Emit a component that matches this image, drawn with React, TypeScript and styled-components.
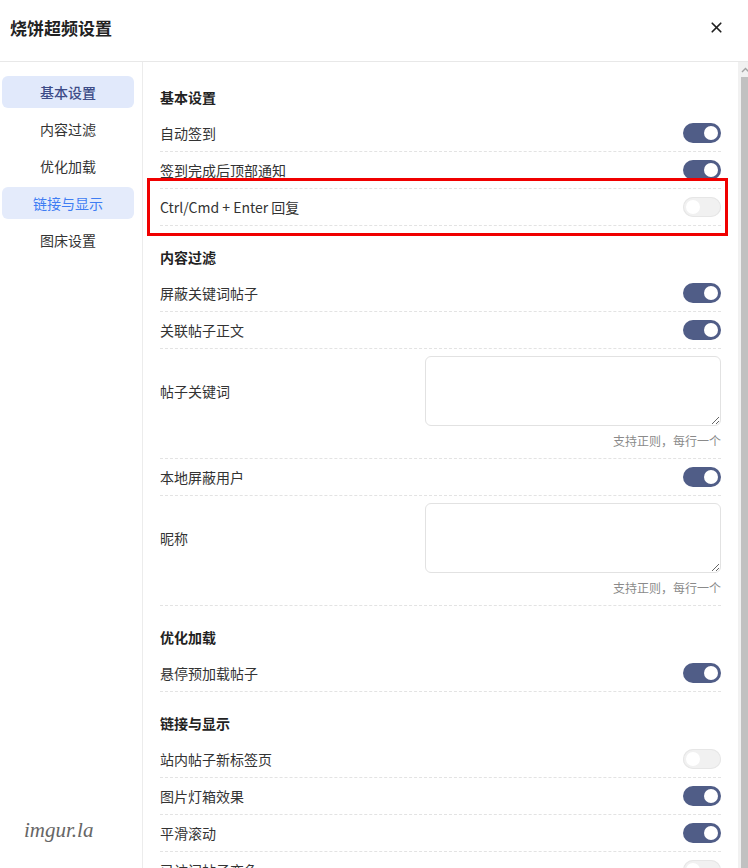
import React from "react";
import styled, { createGlobalStyle, css } from "styled-components";
import { X } from "lucide-react";

const GlobalStyle = createGlobalStyle`
  html, body {
    margin: 0;
    padding: 0;
    overflow: hidden;
    background: #ffffff;
  }
  body {
    font-family: "Noto Sans CJK SC", "Noto Sans", sans-serif;
    color: #333333;
  }
  * { box-sizing: border-box; }
`;

const Dialog = styled.div`
  position: relative;
  width: 753px;
  height: 960px;
  display: flex;
  flex-direction: column;
  background: #ffffff;
`;

const Header = styled.header`
  height: 62px;
  flex: 0 0 auto;
  display: flex;
  align-items: center;
  justify-content: space-between;
  padding: 0 25px 0 10px;
  border-bottom: 1px solid #e8e8e8;
`;

const Title = styled.h2`
  margin: 0 0 6px;
  font-size: 17px;
  font-weight: 700;
  color: #222222;
  line-height: 24px;
`;

const CloseButton = styled.button`
  width: 24px;
  height: 24px;
  margin-bottom: 6px;
  padding: 0;
  border: none;
  background: transparent;
  color: #1f1f1f;
  display: flex;
  align-items: center;
  justify-content: center;
  cursor: pointer;
`;

const Body = styled.div`
  flex: 1 1 auto;
  min-height: 0;
  display: flex;
`;

const Sidebar = styled.nav`
  width: 143px;
  flex: 0 0 auto;
  border-right: 1px solid #ececec;
  padding: 14px 8px 0 2px;
  display: flex;
  flex-direction: column;
  gap: 5px;
`;

type NavTone = "plain" | "current" | "link";

const NavItem = styled.div<{ $tone: NavTone }>`
  height: 32px;
  border-radius: 6px;
  display: flex;
  align-items: center;
  justify-content: center;
  font-size: 14px;
  color: #333333;
  ${({ $tone }) =>
    $tone === "current" &&
    css`
      background: #e1e9fb;
      color: #3d4c88;
      font-weight: 500;
    `}
  ${({ $tone }) =>
    $tone === "link" &&
    css`
      background: #e4ebfb;
      color: #3f7df3;
    `}
`;

const Watermark = styled.div`
  position: absolute;
  left: 24px;
  top: 818px;
  font-family: "Liberation Serif", "DejaVu Serif", serif;
  font-style: italic;
  font-size: 21px;
  color: #666666;
  pointer-events: none;
`;

const Content = styled.main`
  flex: 1 1 auto;
  min-width: 0;
  overflow: hidden;
  padding: 25px 17px 20px 17px;
`;

/* classic scroll rail drawn next to the settings list */
const ScrollRail = styled.div`
  width: 15px;
  flex: 0 0 auto;
  background: #f1f1f1;
  display: flex;
  flex-direction: column;
  align-items: center;
`;

const RailArrow = styled.div`
  height: 15px;
  display: flex;
  align-items: center;
  justify-content: center;
  color: #a3a3a3;
`;

const RailThumb = styled.div`
  width: 9px;
  flex: 1 1 auto;
  margin-bottom: 40px;
  background: #c1c1c1;
`;

const Section = styled.section`
  & + & {
    margin-top: 21px;
  }
`;

const SectionTitle = styled.h3`
  margin: 0 0 8px;
  font-size: 14px;
  font-weight: 700;
  line-height: 20px;
  color: #222222;
`;

const Row = styled.div<{ $field?: boolean; $marked?: boolean }>`
  position: relative;
  display: flex;
  justify-content: space-between;
  align-items: ${({ $field }) => ($field ? "flex-start" : "center")};
  padding: ${({ $field }) => ($field ? "7px 0 8px" : "8px 0")};
  border-bottom: 1px dashed #e3e3e3;
  ${({ $marked }) =>
    $marked &&
    css`
      &::after {
        content: "";
        position: absolute;
        left: -13px;
        right: -7px;
        top: -11px;
        bottom: -11px;
        border: 3px solid #f00000;
        pointer-events: none;
      }
    `}
`;

const Label = styled.span<{ $tall?: boolean }>`
  font-size: 14px;
  line-height: 20px;
  color: #333333;
  ${({ $tall }) =>
    $tall &&
    css`
      height: 70px;
      display: flex;
      align-items: center;
    `}
`;

const Switch = styled.span<{ $on: boolean }>`
  position: relative;
  flex: 0 0 auto;
  width: 38px;
  height: 20px;
  border-radius: 10px;
  background: ${({ $on }) => ($on ? "#505d87" : "#f1f1f1")};
  box-shadow: ${({ $on }) => ($on ? "none" : "inset 0 0 0 1px #e6e6e6")};

  &::after {
    content: "";
    position: absolute;
    top: 3px;
    left: ${({ $on }) => ($on ? "21px" : "3px")};
    width: 14px;
    height: 14px;
    border-radius: 50%;
    background: #ffffff;
  }
`;

const FieldColumn = styled.div`
  width: 296px;
  display: flex;
  flex-direction: column;
`;

const TextArea = styled.textarea`
  width: 296px;
  height: 70px;
  border: 1px solid #e2e2e2;
  border-radius: 6px;
  resize: vertical;
  font-family: inherit;
  font-size: 13px;
  padding: 6px 8px;
  outline: none;
  background: #ffffff;
`;

const Hint = styled.div`
  margin-top: 6px;
  font-size: 12px;
  line-height: 18px;
  color: #8a8a8a;
  text-align: right;
`;

type Item =
  | { kind: "switch"; label: string; on: boolean; marked?: boolean }
  | { kind: "text"; label: string };

const sections: { title: string; items: Item[] }[] = [
  {
    title: "基本设置",
    items: [
      { kind: "switch", label: "自动签到", on: true },
      { kind: "switch", label: "签到完成后顶部通知", on: true },
      { kind: "switch", label: "Ctrl/Cmd + Enter 回复", on: false, marked: true },
    ],
  },
  {
    title: "内容过滤",
    items: [
      { kind: "switch", label: "屏蔽关键词帖子", on: true },
      { kind: "switch", label: "关联帖子正文", on: true },
      { kind: "text", label: "帖子关键词" },
      { kind: "switch", label: "本地屏蔽用户", on: true },
      { kind: "text", label: "昵称" },
    ],
  },
  {
    title: "优化加载",
    items: [{ kind: "switch", label: "悬停预加载帖子", on: true }],
  },
  {
    title: "链接与显示",
    items: [
      { kind: "switch", label: "站内帖子新标签页", on: false },
      { kind: "switch", label: "图片灯箱效果", on: true },
      { kind: "switch", label: "平滑滚动", on: true },
      { kind: "switch", label: "已访问帖子变色", on: false },
    ],
  },
];

const nav: { label: string; tone: NavTone }[] = [
  { label: "基本设置", tone: "current" },
  { label: "内容过滤", tone: "plain" },
  { label: "优化加载", tone: "plain" },
  { label: "链接与显示", tone: "link" },
  { label: "图床设置", tone: "plain" },
];

export default function App() {
  return (
    <>
      <GlobalStyle />
      <Dialog>
        <Header>
          <Title>烧饼超频设置</Title>
          <CloseButton aria-label="关闭">
            <X size={17} strokeWidth={2.4} />
          </CloseButton>
        </Header>
        <Body>
          <Sidebar>
            {nav.map((n) => (
              <NavItem key={n.label} $tone={n.tone}>
                {n.label}
              </NavItem>
            ))}
          </Sidebar>
          <Content>
            {sections.map((s) => (
              <Section key={s.title}>
                <SectionTitle>{s.title}</SectionTitle>
                {s.items.map((it) =>
                  it.kind === "switch" ? (
                    <Row key={it.label} $marked={it.marked}>
                      <Label>{it.label}</Label>
                      <Switch $on={it.on} />
                    </Row>
                  ) : (
                    <Row key={it.label} $field>
                      <Label $tall>{it.label}</Label>
                      <FieldColumn>
                        <TextArea />
                        <Hint>支持正则，每行一个</Hint>
                      </FieldColumn>
                    </Row>
                  )
                )}
              </Section>
            ))}
          </Content>
          <ScrollRail>
            <RailArrow>
              <svg width="9" height="6" viewBox="0 0 9 6">
                <path d="M1 5 L4.5 1.5 L8 5" fill="none" stroke="currentColor" strokeWidth="1.4" />
              </svg>
            </RailArrow>
            <RailThumb />
          </ScrollRail>
        </Body>
        <Watermark>imgur.la</Watermark>
      </Dialog>
    </>
  );
}
